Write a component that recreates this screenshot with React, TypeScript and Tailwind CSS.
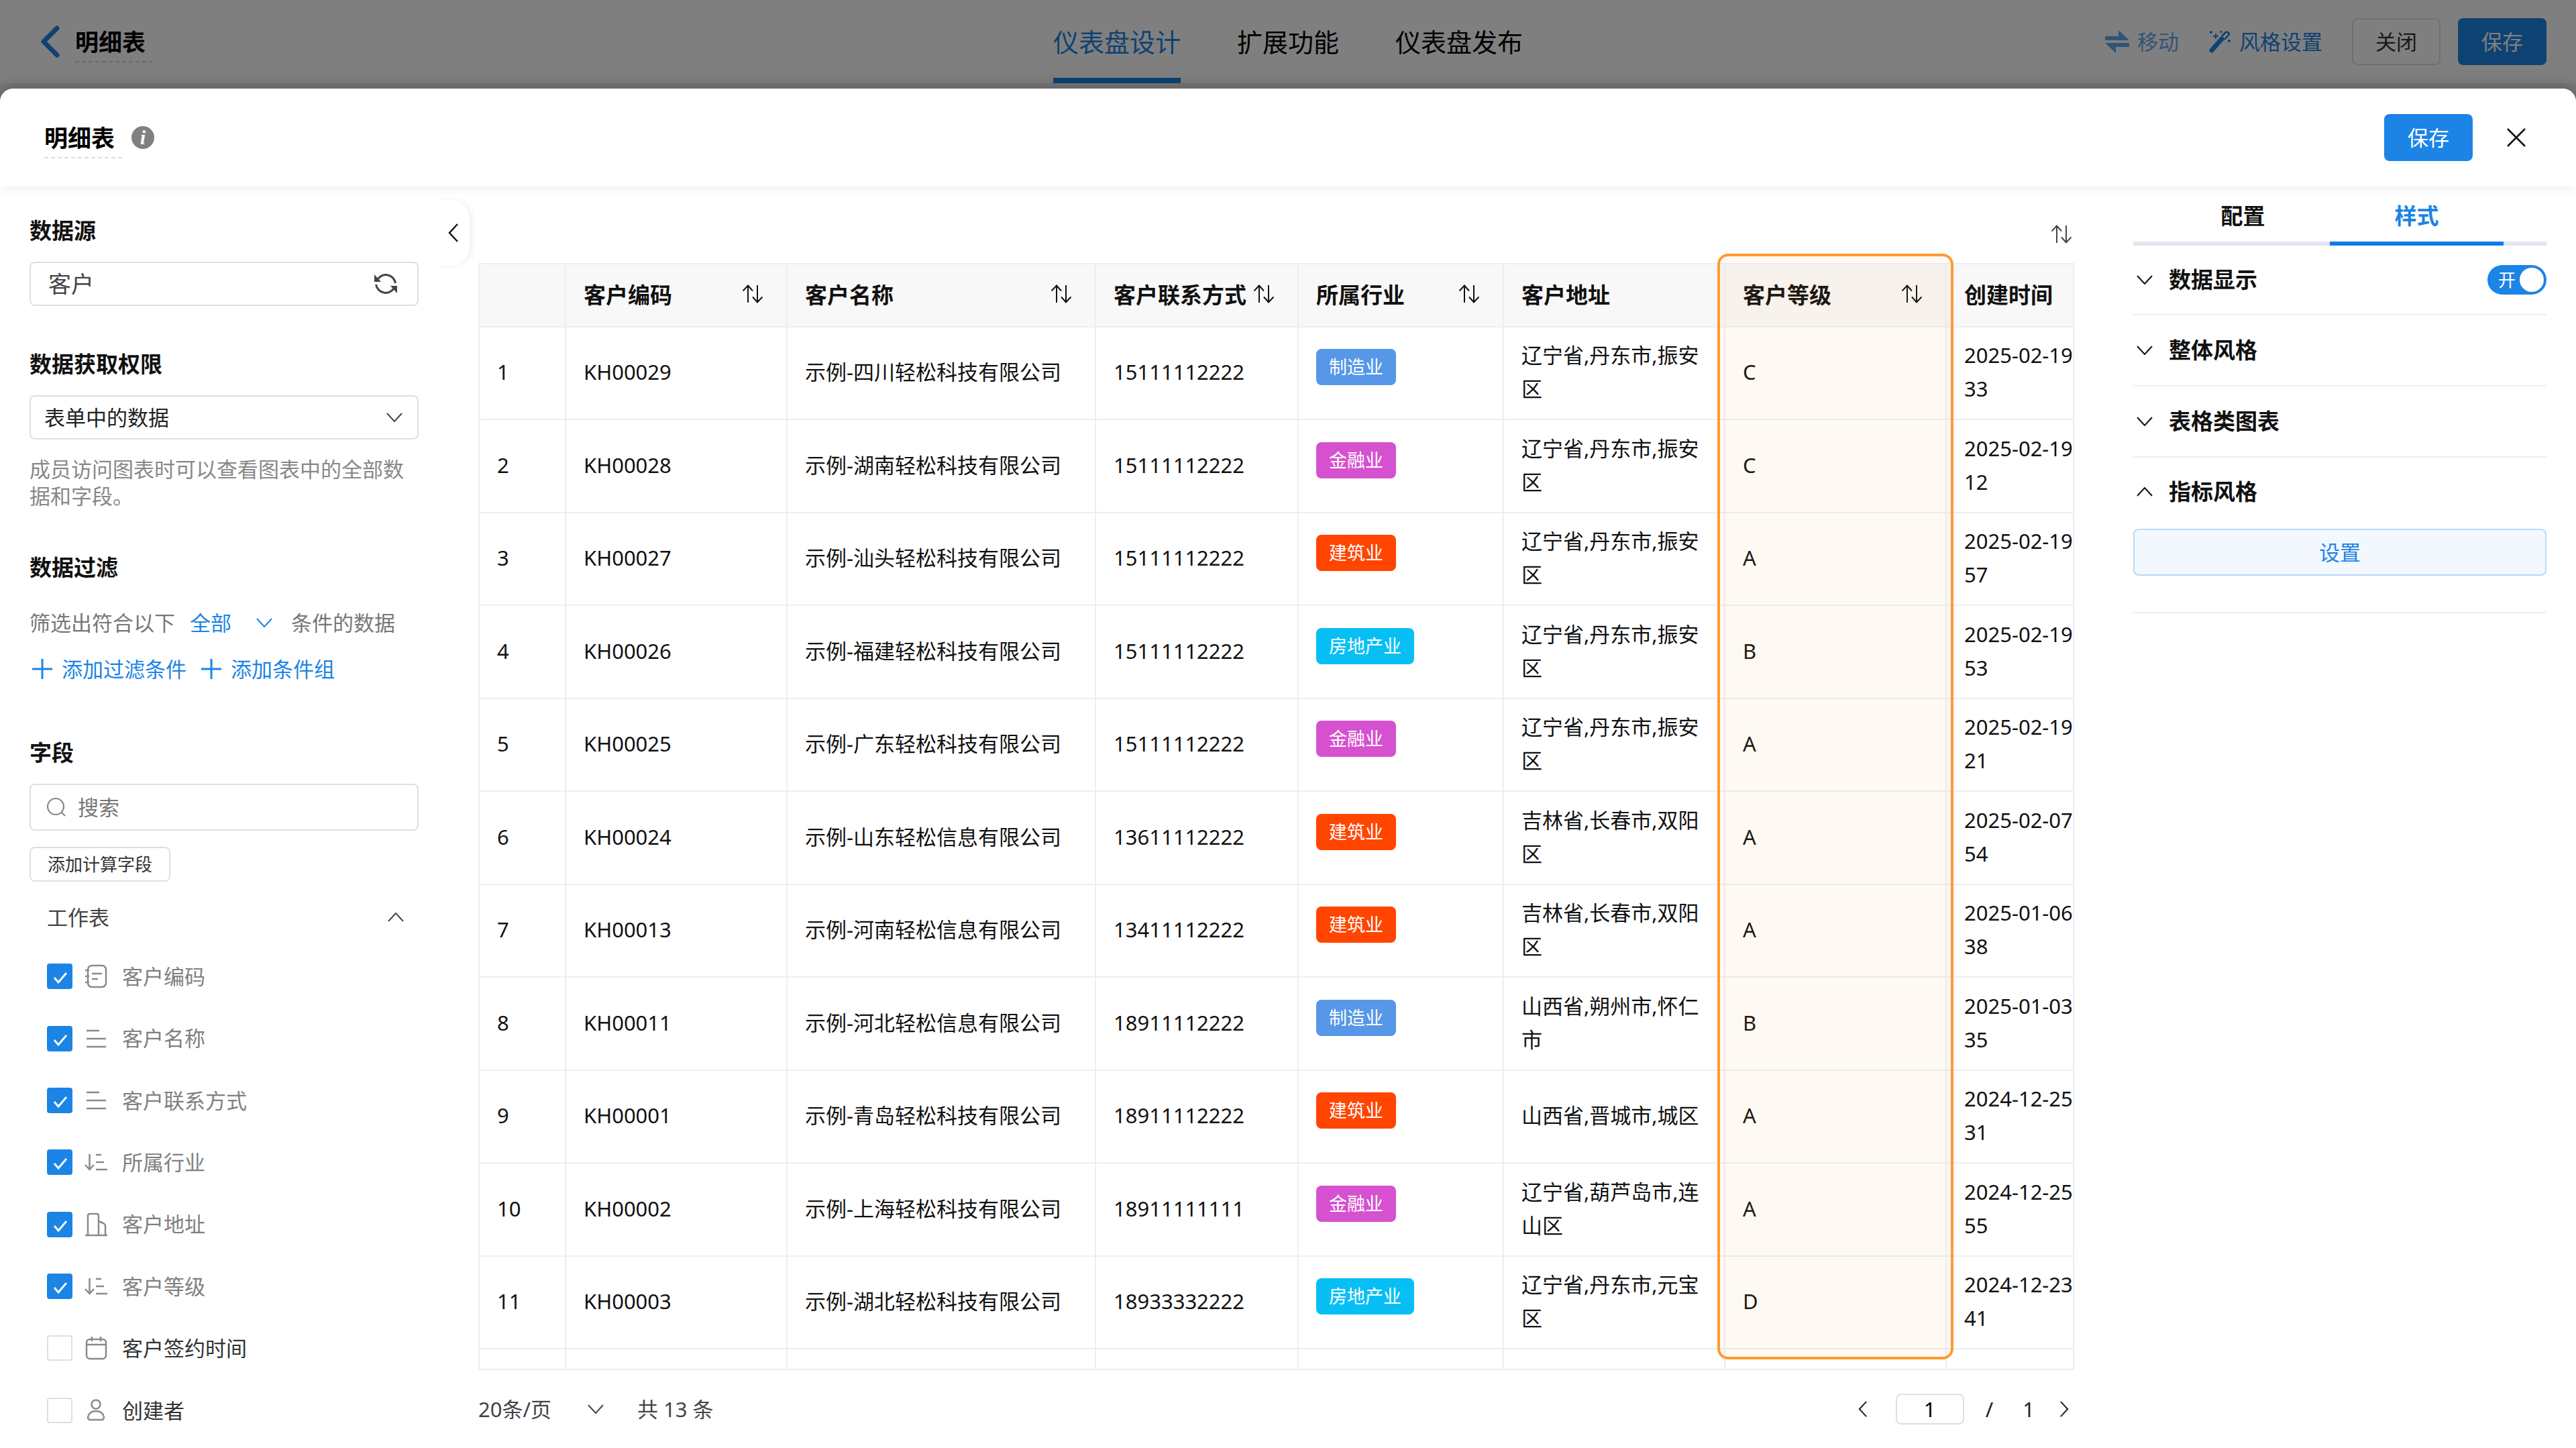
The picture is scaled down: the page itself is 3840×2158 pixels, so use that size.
import { useState } from 'react';

type Row = {
  code: string;
  name: string;
  phone: string;
  industry: string;
  address: string;
  level: string;
  date: string;
  sec: string;
};

const rows: Row[] = [
  { code: 'KH00029', name: '示例-四川轻松科技有限公司', phone: '15111112222', industry: '制造业', address: '辽宁省,丹东市,振安区', level: 'C', date: '2025-02-19', sec: '33' },
  { code: 'KH00028', name: '示例-湖南轻松科技有限公司', phone: '15111112222', industry: '金融业', address: '辽宁省,丹东市,振安区', level: 'C', date: '2025-02-19', sec: '12' },
  { code: 'KH00027', name: '示例-汕头轻松科技有限公司', phone: '15111112222', industry: '建筑业', address: '辽宁省,丹东市,振安区', level: 'A', date: '2025-02-19', sec: '57' },
  { code: 'KH00026', name: '示例-福建轻松科技有限公司', phone: '15111112222', industry: '房地产业', address: '辽宁省,丹东市,振安区', level: 'B', date: '2025-02-19', sec: '53' },
  { code: 'KH00025', name: '示例-广东轻松科技有限公司', phone: '15111112222', industry: '金融业', address: '辽宁省,丹东市,振安区', level: 'A', date: '2025-02-19', sec: '21' },
  { code: 'KH00024', name: '示例-山东轻松信息有限公司', phone: '13611112222', industry: '建筑业', address: '吉林省,长春市,双阳区', level: 'A', date: '2025-02-07', sec: '54' },
  { code: 'KH00013', name: '示例-河南轻松信息有限公司', phone: '13411112222', industry: '建筑业', address: '吉林省,长春市,双阳区', level: 'A', date: '2025-01-06', sec: '38' },
  { code: 'KH00011', name: '示例-河北轻松信息有限公司', phone: '18911112222', industry: '制造业', address: '山西省,朔州市,怀仁市', level: 'B', date: '2025-01-03', sec: '35' },
  { code: 'KH00001', name: '示例-青岛轻松科技有限公司', phone: '18911112222', industry: '建筑业', address: '山西省,晋城市,城区', level: 'A', date: '2024-12-25', sec: '31' },
  { code: 'KH00002', name: '示例-上海轻松科技有限公司', phone: '18911111111', industry: '金融业', address: '辽宁省,葫芦岛市,连山区', level: 'A', date: '2024-12-25', sec: '55' },
  { code: 'KH00003', name: '示例-湖北轻松科技有限公司', phone: '18933332222', industry: '房地产业', address: '辽宁省,丹东市,元宝区', level: 'D', date: '2024-12-23', sec: '41' },
];

const tagColors: Record<string, string> = {
  制造业: 'bg-[#5797e7]',
  金融业: 'bg-[#d651cf]',
  建筑业: 'bg-[#ff4500]',
  房地产业: 'bg-[#08bff5]',
};

const columns = [
  { title: '', width: 'w-[129px]', sort: false },
  { title: '客户编码', width: 'w-[330px]', sort: true },
  { title: '客户名称', width: 'w-[460px]', sort: true },
  { title: '客户联系方式', width: 'w-[302px]', sort: true },
  { title: '所属行业', width: 'w-[306px]', sort: true },
  { title: '客户地址', width: 'w-[330px]', sort: false },
  { title: '客户等级', width: 'w-[330px]', sort: true },
  { title: '创建时间', width: 'w-[260px]', sort: false },
];

const fields = [
  { name: '客户编码', icon: 'code', checked: true },
  { name: '客户名称', icon: 'text', checked: true },
  { name: '客户联系方式', icon: 'text', checked: true },
  { name: '所属行业', icon: 'select', checked: true },
  { name: '客户地址', icon: 'address', checked: true },
  { name: '客户等级', icon: 'select', checked: true },
  { name: '客户签约时间', icon: 'date', checked: false },
  { name: '创建者', icon: 'user', checked: false },
];

const panels = [
  { title: '数据显示', height: 'h-[104px]', hasSwitch: true },
  { title: '整体风格', height: 'h-[106px]', hasSwitch: false },
  { title: '表格类图表', height: 'h-[106px]', hasSwitch: false },
];

const chevrons = {
  down: 'M1 1 L12 13 L23 1',
  up: 'M1 13 L12 1 L23 13',
};

function Chevron({ dir, className = '' }: { dir: 'down' | 'up'; className?: string }) {
  return (
    <svg viewBox="0 0 24 14" className={`h-[14px] w-6 shrink-0 ${className}`} fill="none" stroke="currentColor" strokeWidth="2">
      <path d={chevrons[dir]} />
    </svg>
  );
}

function SideChevron({ right = false, className = '' }: { right?: boolean; className?: string }) {
  return (
    <svg viewBox="0 0 16 28" className={className} fill="none" stroke="currentColor" strokeWidth="2.4">
      <path d={right ? 'M2 1 L14 14 L2 27' : 'M14 1 L2 14 L14 27'} />
    </svg>
  );
}

function SortIcon() {
  return (
    <svg viewBox="0 0 32 28" className="h-7 w-8 shrink-0" fill="none" stroke="currentColor" strokeWidth="2">
      <path d="M9 27 V2 M1.500 9.500 L9 1.500 L16 9.500" />
      <path d="M23 1 V26 M16 18.500 L23 26.500 L30.500 18.500" />
    </svg>
  );
}

function RefreshIcon() {
  return (
    <svg viewBox="0 0 36 36" className="h-9 w-9" fill="none" stroke="currentColor" strokeWidth="3">
      <path d="M5 13 A14.500 14.500 0 0 1 32.500 17" />
      <path d="M31 23 A14.500 14.500 0 0 1 3.500 19" />
      <path d="M1 4 V15 H11 Z" fill="currentColor" stroke="none" />
      <path d="M35 32 V21 H25 Z" fill="currentColor" stroke="none" />
    </svg>
  );
}

function FieldIcon({ type }: { type: string }) {
  return (
    <svg viewBox="0 0 34 36" className="h-9 w-[34px] shrink-0 text-[#8a8a8a]" fill="none" stroke="currentColor" strokeWidth="2.500">
      {type === 'code' && (
        <>
          <rect x="5" y="2" width="27" height="32" rx="6" />
          <path d="M11 14 H26 M11 22 H20" />
          <path d="M1 9 H7 M1 18 H7 M1 27 H7" />
        </>
      )}
      {type === 'text' && <path d="M3 6 H22 M3 18 H32 M3 30 H32" />}
      {type === 'select' && (
        <>
          <path d="M7.500 6 V29 M1 22 L7.500 29 L14 22" />
          <path d="M17 7 H25 M17 18 H29 M17 29 H34" />
        </>
      )}
      {type === 'address' && (
        <>
          <path d="M5 34 V5 Q5 2 8 2 H18 Q21 2 21 5 V34" />
          <path d="M21 13 L28 16 Q31 17.500 31 20 V34" />
          <path d="M1 34 H34" />
        </>
      )}
      {type === 'date' && (
        <>
          <rect x="3" y="5" width="29" height="29" rx="5" />
          <path d="M3 13 H32 M11 1 V8 M24 1 V8" />
        </>
      )}
      {type === 'user' && (
        <>
          <circle cx="17" cy="9" r="6.500" />
          <path d="M5 28 Q7 19 17 19 Q27 19 29 28 Q29 32 25 32 H9 Q5 32 5 28 Z" />
        </>
      )}
    </svg>
  );
}

function TopBar() {
  return (
    <header className="grid h-[124px] shrink-0 grid-cols-3 bg-white text-[31px]">
      <div className="flex items-center gap-[22px] pl-[60px]">
        <button aria-label="返回" className="text-[#1c84e5]">
          <svg viewBox="0 0 30 50" className="h-[50px] w-[30px]" fill="none" stroke="currentColor" strokeWidth="7" strokeLinecap="round" strokeLinejoin="round">
            <path d="M25 5 L5 25 L25 45" />
          </svg>
        </button>
        <h1 className="w-[116px] border-b-2 border-dashed border-[#d0d0d0] pt-1 text-[35px] leading-[56px] font-bold text-black">明细表</h1>
      </div>
      <nav className="flex justify-center gap-[84px] text-[38px] text-black">
        <a href="#design" className="border-b-8 border-[#1c84e5] pt-2 leading-[108px] text-[#1c84e5]">仪表盘设计</a>
        <a href="#extend" className="pt-2 leading-[108px]">扩展功能</a>
        <a href="#publish" className="pt-2 leading-[108px]">仪表盘发布</a>
      </nav>
      <div className="flex items-center justify-end pr-11 text-[#1c84e5]">
        <button className="flex items-center gap-3 opacity-70">
          <svg viewBox="0 0 36 34" className="h-[34px] w-9" fill="currentColor">
            <path d="M0 9 H20 V0 L36 15 H0 Z" />
            <path d="M36 25 H16 V34 L0 19 H36 Z" />
          </svg>
          移动
        </button>
        <button className="ml-11 flex items-center gap-3">
          <svg viewBox="0 0 34 34" className="h-[34px] w-[34px]" fill="none" stroke="currentColor">
            <path d="M5 30 L20 13" strokeWidth="7" strokeLinecap="round" />
            <path d="M20 9 L26 3 Q30 2 31 6 L24 14" strokeWidth="2.500" />
            <path d="M11 5 V13 M7 9 H15 M4 1 V5 M2 3 H6 M19 1 V4 M17.500 2.500 H20.500 M31 14 V18 M29 16 H33" strokeWidth="2" />
          </svg>
          风格设置
        </button>
        <button className="ml-11 h-[70px] w-[132px] rounded-lg border-2 border-[#dcdfe6] text-[#333]">关闭</button>
        <button className="ml-[26px] h-[70px] w-[132px] rounded-lg bg-[#1c84e5] text-white">保存</button>
      </div>
    </header>
  );
}

function DialogHeader() {
  return (
    <div className="relative z-10 flex h-[146px] shrink-0 items-center rounded-t-[20px] bg-white pr-[74px] pl-[66px] shadow-[0_4px_16px_rgba(0,0,0,0.06)]">
      <h2 className="w-[116px] border-b-2 border-dashed border-[#dcdcdc] pt-1 text-[35px] leading-[56px] font-bold text-black">明细表</h2>
      <span className="ml-[14px] flex h-[34px] w-[34px] items-center justify-center rounded-full bg-[#808080] font-['Liberation_Serif'] text-[30px] leading-[34px] font-bold text-white italic">i</span>
      <button className="ml-auto h-[70px] w-[132px] rounded-lg bg-[#1c84e5] text-[31px] text-white">保存</button>
      <button aria-label="关闭弹窗" className="ml-[50px]">
        <svg viewBox="0 0 30 30" className="h-[30px] w-[30px]" stroke="#111" strokeWidth="2.500">
          <path d="M2 2 L28 28 M28 2 L2 28" />
        </svg>
      </button>
    </div>
  );
}

function Sidebar() {
  const [open, setOpen] = useState(true);

  return (
    <aside className="relative flex w-[713px] shrink-0 flex-col pt-[42px] pr-[89px] pb-[10px] pl-11 text-[31px] text-[#777]">
      <button aria-label="收起" className="absolute top-5 right-[13px] flex h-[98px] w-12 items-center justify-center rounded-r-[28px] bg-white text-[#111] shadow-[4px_0_8px_rgba(0,0,0,0.06)]">
        <SideChevron className="h-7 w-4" />
      </button>

      <h3 className="mb-[22px] text-[33px] leading-[48px] font-bold text-[#111]">数据源</h3>
      <div className="flex h-[66px] shrink-0 items-center justify-between rounded-lg border-2 border-[#dcdfe6] pr-[29px] pl-[26px] text-[34px] text-[#444]">
        <span>客户</span>
        <button aria-label="刷新"><RefreshIcon /></button>
      </div>

      <h3 className="mt-[63px] mb-[22px] text-[33px] leading-[48px] font-bold text-[#111]">
        <label htmlFor="scope">数据获取权限</label>
      </h3>
      <div className="relative">
        <select id="scope" className="block h-[66px] w-full appearance-none rounded-lg border-2 border-[#dcdfe6] pl-5 text-[31px] text-[#222]">
          <option>表单中的数据</option>
        </select>
        <Chevron dir="down" className="pointer-events-none absolute top-[26px] right-6 text-[#444]" />
      </div>
      <p className="mt-6 leading-[40px] text-[#888]">成员访问图表时可以查看图表中的全部数据和字段。</p>

      <h3 className="mt-[63px] mb-[34px] text-[33px] leading-[48px] font-bold text-[#111]">数据过滤</h3>
      <div className="flex h-12 shrink-0 items-center">
        筛选出符合以下
        <div className="relative ml-[22px]">
          <select aria-label="过滤方式" className="block h-12 w-[123px] appearance-none text-[31px] text-[#1c84e5]">
            <option>全部</option>
          </select>
          <Chevron dir="down" className="pointer-events-none absolute top-[17px] right-0 text-[#1c84e5]" />
        </div>
        <span className="ml-7">条件的数据</span>
      </div>
      <div className="mt-[21px] flex h-12 shrink-0 items-center text-[#1c84e5]">
        {['添加过滤条件', '添加条件组'].map((text) => (
          <button key={text} className="mr-[18px] flex items-center gap-[14px] pl-1">
            <svg viewBox="0 0 30 30" className="h-[30px] w-[30px]" stroke="currentColor" strokeWidth="3">
              <path d="M0 15 H30 M15 0 V30" />
            </svg>
            {text}
          </button>
        ))}
      </div>

      <h3 className="mt-[77px] mb-[22px] text-[33px] leading-[48px] font-bold text-[#111]">字段</h3>
      <label className="flex h-[70px] shrink-0 items-center gap-[18px] rounded-lg border-2 border-[#dcdfe6] px-6">
        <svg viewBox="0 0 28 28" className="h-7 w-7 shrink-0" fill="none" stroke="#888" strokeWidth="2.200">
          <circle cx="13" cy="13" r="12" />
          <path d="M21 21 L27 27" />
        </svg>
        <input type="text" placeholder="搜索" aria-label="搜索" className="w-full outline-none placeholder:text-[#777]" />
      </label>
      <button className="mt-6 h-[52px] w-[210px] shrink-0 rounded-lg border-2 border-[#dcdfe6] text-[26px] text-[#333]">添加计算字段</button>

      <button onClick={() => setOpen(!open)} className="mt-[29px] flex h-12 shrink-0 items-center justify-between pr-[22px] pl-[26px] text-[#444]">
        工作表
        <Chevron dir={open ? 'up' : 'down'} />
      </button>
      {open && (
        <ul className="mt-[18px] flex min-h-0 flex-1 flex-col">
          {fields.map((f) => (
            <li key={f.name} className="flex flex-1 items-center">
              <label className={`flex items-center pl-[26px] ${f.checked ? 'text-[#808080]' : 'text-[#333]'}`}>
                <span className="relative mr-[18px] h-[38px] w-[38px]">
                  <input type="checkbox" defaultChecked={f.checked} className="peer block h-[38px] w-[38px] appearance-none rounded border-2 border-[#dcdfe6] bg-white checked:border-[#1c84e5] checked:bg-[#1c84e5]" />
                  <svg viewBox="0 0 38 38" className="pointer-events-none absolute inset-0 hidden h-[38px] w-[38px] peer-checked:block" fill="none" stroke="#fff" strokeWidth="2.800">
                    <path d="M11 21 L17 28 L29 14" />
                  </svg>
                </span>
                <FieldIcon type={f.icon} />
                <span className="ml-[22px]">{f.name}</span>
              </label>
            </li>
          ))}
        </ul>
      )}
    </aside>
  );
}

function DetailTable() {
  return (
    <main className="flex min-w-0 flex-1 flex-col text-[31px] text-[#111]">
      <div className="flex h-[114px] shrink-0 items-center justify-end text-[#444]">
        <button aria-label="排序" className="pt-7 pr-[3px]"><SortIcon /></button>
      </div>
      <div className="relative min-h-0 flex-1">
        <div className="h-full overflow-hidden border-2 border-[#ebeef5]">
          <table className="w-[2447px] table-fixed border-separate border-spacing-0">
            <thead>
              <tr className="h-[94px]">
                {columns.map((col) => (
                  <th key={col.title} className={`${col.width} border-r-2 border-b-2 border-[#ebeef5] bg-[#f8f8f8] pl-[26px] text-left text-[33px] font-bold`}>
                    <div className="flex items-center justify-between pr-[34px]">
                      <span className="whitespace-nowrap">{col.title}</span>
                      {col.sort && <button aria-label={`${col.title}排序`} className="pb-1"><SortIcon /></button>}
                    </div>
                  </th>
                ))}
              </tr>
            </thead>
            <tbody className="[&_td]:border-r-2 [&_td]:border-b-2 [&_td]:border-[#ebeef5] [&_td]:pb-1 [&_td]:pl-[26px] [&_td]:leading-[50px]">
              {rows.map((row, i) => (
                <tr key={row.code} className="h-[138px] even:h-[139px]">
                  <td>{i + 1}</td>
                  <td>{row.code}</td>
                  <td>{row.name}</td>
                  <td>{row.phone}</td>
                  <td>
                    <span className={`mb-[14px] block h-[54px] w-fit rounded-lg px-[19px] text-[27px] leading-[54px] text-white ${tagColors[row.industry]}`}>{row.industry}</span>
                  </td>
                  <td className="pr-[26px]">{row.address}</td>
                  <td>{row.level}</td>
                  <td>
                    {row.date}
                    <br />
                    {row.sec}
                  </td>
                </tr>
              ))}
              <tr className="h-[143px]">
                <td /><td /><td /><td /><td />
                <td className="pr-[26px]">辽宁省,丹东市,振安区</td>
                <td /><td />
              </tr>
            </tbody>
          </table>
        </div>
        {/* highlighted column */}
        <div className="pointer-events-none absolute -top-[14px] right-[180px] bottom-4 w-[352px] rounded-2xl border-4 border-[#ff9b30] bg-[#ff9b30]/6" />
      </div>
      <footer className="flex h-[116px] shrink-0 items-center text-[#444]">
        <div className="relative">
          <select aria-label="每页条数" className="block h-12 w-[187px] appearance-none text-[31px]">
            <option>20条/页</option>
          </select>
          <Chevron dir="down" className="pointer-events-none absolute top-[17px] right-0" />
        </div>
        <span className="ml-[50px]">共 13 条</span>
        <div className="ml-auto flex items-center pr-2 text-[#222]">
          <button aria-label="上一页"><SideChevron className="h-6 w-[14px]" /></button>
          <input aria-label="页码" defaultValue="1" className="ml-[42px] h-[46px] w-[102px] rounded-lg border-2 border-[#dcdfe6] text-center text-black" />
          <span className="ml-8">/</span>
          <span className="ml-11">1</span>
          <button aria-label="下一页" className="ml-[37px]"><SideChevron right className="h-6 w-[14px]" /></button>
        </div>
      </footer>
    </main>
  );
}

function StylePanel() {
  return (
    <aside className="w-[748px] shrink-0 pr-11 pl-[88px] text-[33px] font-bold text-[#111]">
      <div role="tablist" className="flex h-[88px] items-stretch border-b-[6px] border-[#e1e5ec] pl-[34px]">
        <button role="tab" aria-selected="false" className="w-[259px] pt-1.5">配置</button>
        <button role="tab" aria-selected="true" className="-mb-[6px] w-[259px] border-b-[6px] border-[#0a7de6] pt-1.5 text-[#1c84e5]">样式</button>
      </div>
      {panels.map((panel) => (
        <div key={panel.title} className={`flex items-center justify-between border-b-2 border-[#ebeef5] ${panel.height}`}>
          <button className="flex items-center gap-6 pl-[5px]">
            <Chevron dir="down" />
            {panel.title}
          </button>
          {panel.hasSwitch && (
            <label className="relative block h-11 w-[88px]">
              <input type="checkbox" role="switch" aria-label={panel.title} defaultChecked className="block h-11 w-[88px] appearance-none rounded-full bg-[#1c84e5] before:mt-1 before:ml-12 before:block before:h-9 before:w-9 before:rounded-full before:bg-white" />
              <span className="absolute top-0 left-4 text-[26px] leading-[44px] font-normal text-white">开</span>
            </label>
          )}
        </div>
      ))}
      <div className="border-b-2 border-[#ebeef5] pb-[54px]">
        <button className="mb-1 flex h-[102px] items-center gap-6 pl-[5px]">
          <Chevron dir="up" />
          指标风格
        </button>
        <button className="h-[70px] w-full rounded-lg border-2 border-[#b8daf8] bg-[#f3f8fe] text-[31px] font-normal text-[#1c84e5]">设置</button>
      </div>
    </aside>
  );
}

export default function App() {
  return (
    <div className="relative flex h-screen flex-col overflow-hidden bg-[#f0f0f0] font-['Noto_Sans','Noto_Sans_CJK_SC',sans-serif]">
      <TopBar />
      <div className="absolute inset-0 bg-black/50" />
      <section role="dialog" aria-label="明细表" className="relative mt-2 flex min-h-0 flex-1 flex-col rounded-t-[20px] bg-white shadow-[0_0_28px_rgba(0,0,0,0.25)]">
        <DialogHeader />
        <div className="flex min-h-0 flex-1">
          <Sidebar />
          <DetailTable />
          <StylePanel />
        </div>
      </section>
    </div>
  );
}
